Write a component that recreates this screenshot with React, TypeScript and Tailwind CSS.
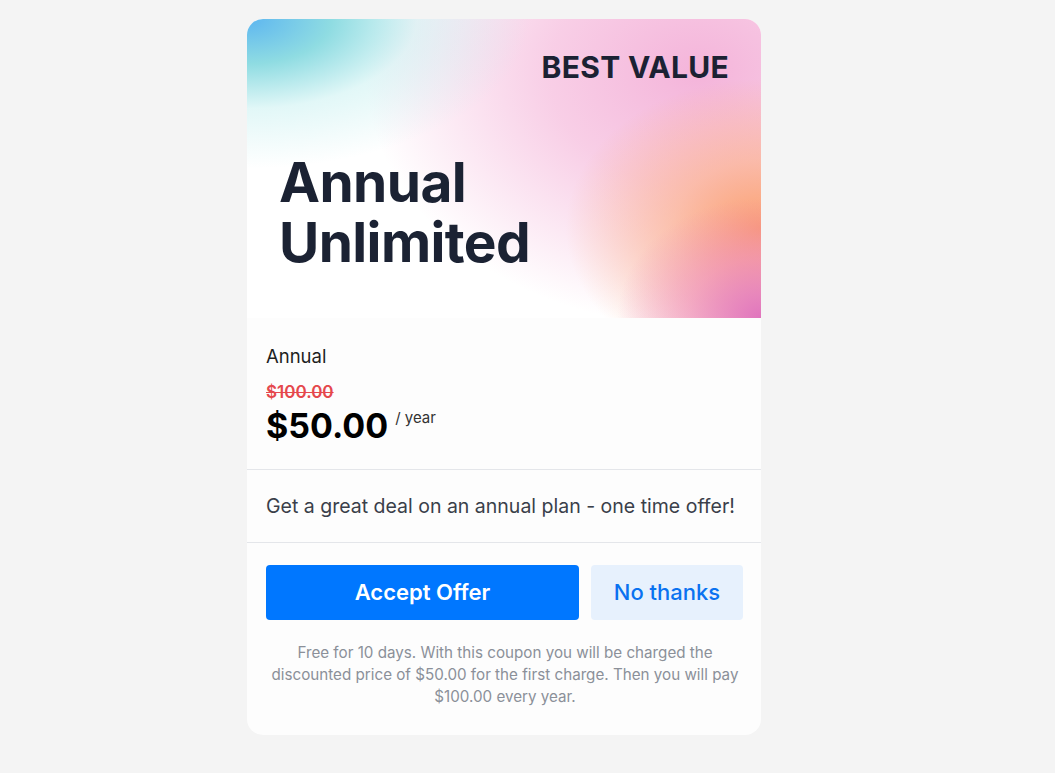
import React from "react";

export default function App() {
  return (
    <div className="min-h-screen w-full bg-[#f4f4f4] pt-[19px] pl-[247px]" style={{ fontFamily: "Inter, 'Noto Sans', sans-serif" }}>
      <div className="w-[514px] overflow-hidden rounded-[16px] bg-[#fdfdfd]">
        <div className="h-[299px] bg-white bg-[radial-gradient(ellipse_55%_50%_at_0%_0%,#5db6f0_0%,#8fdce2_30%,rgba(190,238,238,0.45)_60%,transparent_100%),radial-gradient(ellipse_28%_40%_at_100%_100%,#e074bd_0%,rgba(235,130,190,0.55)_50%,transparent_100%),radial-gradient(ellipse_38%_50%_at_100%_70%,#fb9e6e_0%,rgba(252,175,130,0.6)_45%,transparent_100%),radial-gradient(ellipse_65%_85%_at_88%_18%,#f4b4da_0%,rgba(246,190,222,0.75)_45%,transparent_100%)] px-[32px] pt-[30px]">
          <div className="flex justify-end">
            <div className="text-[30px] font-bold leading-[36px] tracking-[0.3px] text-[#1b2233]">BEST VALUE</div>
          </div>
          <div className="mt-[67px] text-[55px] font-bold leading-[60px] tracking-[-0.6px] text-[#1b2233]">
            <div>Annual</div>
            <div>Unlimited</div>
          </div>
        </div>
        <div className="px-[19px] pt-[26px] pb-[21px]">
          <div className="text-[18.5px] leading-6 text-[#1f1f1f]">Annual</div>
          <div className="mt-[12px] text-[17px] font-semibold leading-6 text-[#e5484d] line-through">$100.00</div>
          <div className="flex items-start">
            <span className="text-[34px] font-bold leading-[44px] text-black">$50.00</span>
            <span className="ml-[7px] mt-[4px] text-[15px] leading-5 text-[#333]">/ year</span>
          </div>
        </div>
        <div className="border-t border-[#e4e6ea] px-[19px] pt-[22px] pb-[22px]">
          <div className="text-[19.5px] leading-7 text-[#3a3f4a]">Get a great deal on an annual plan - one time offer!</div>
        </div>
        <div className="border-t border-[#e4e6ea] px-[18px] pt-[22px] pb-[27px]">
          <div className="flex gap-[12px] pl-[1px]">
            <button className="h-[55px] flex-1 rounded-[4px] bg-[#0077ff] text-[22px] font-semibold text-white">Accept Offer</button>
            <button className="h-[55px] w-[152px] rounded-[4px] bg-[#e7f1fd] text-[22px] font-medium text-[#0a72f0]">No thanks</button>
          </div>
          <div className="mx-auto mt-[22px] w-[480px] text-center text-[15.2px] leading-[22px] text-[#8b9099]">
            Free for 10 days. With this coupon you will be charged the discounted price of $50.00 for the first charge. Then you will pay $100.00 every year.
          </div>
        </div>
      </div>
    </div>
  );
}
